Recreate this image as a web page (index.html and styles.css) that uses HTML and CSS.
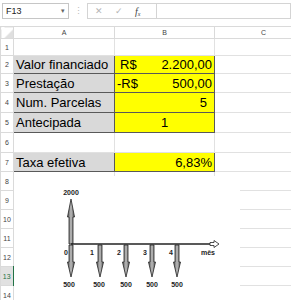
FILE: index.html
```html
<!DOCTYPE html>
<html lang="pt-BR">
<head>
    <meta charset="UTF-8">
    <title>Planilha - Taxa efetiva</title>
    <link rel="stylesheet" href="styles.css">
</head>
<body>
    <div class="formula-bar">
        <div class="name-box"><span>F13</span><span class="drop">&#9662;</span></div>
        <div class="grip">&#8942;</div>
        <div class="fx-buttons">
            <span class="btn">&#10005;</span>
            <span class="btn">&#10003;</span>
            <span class="btn fx">f<sub>x</sub></span>
        </div>
        <div class="formula-input"></div>
    </div>

    <div class="sheet">
        <table class="grid">
            <colgroup>
                <col class="col-head">
                <col class="col-a">
                <col class="col-b">
                <col class="col-c">
            </colgroup>
            <tr class="col-headers">
                <th class="corner"></th><th>A</th><th>B</th><th>C</th>
            </tr>
            <tr class="h17"><th>1</th><td></td><td></td><td></td></tr>
            <tr class="h18"><th>2</th><td class="label">Valor financiado</td><td class="value"><span class="cur">R$</span><span>2.200,00</span></td><td></td></tr>
            <tr><th>3</th><td class="label">Prestação</td><td class="value"><span class="cur neg">-R$</span><span>500,00</span></td><td></td></tr>
            <tr class="h20"><th>4</th><td class="label">Num. Parcelas</td><td class="value right"><span class="pad">5</span></td><td></td></tr>
            <tr class="h20"><th>5</th><td class="label">Antecipada</td><td class="value center">1</td><td></td></tr>
            <tr class="h20"><th>6</th><td></td><td></td><td></td></tr>
            <tr><th>7</th><td class="label">Taxa efetiva</td><td class="value right">6,83%</td><td></td></tr>
            <tr><th>8</th><td></td><td></td><td></td></tr>
            <tr><th>9</th><td></td><td></td><td></td></tr>
            <tr><th>10</th><td></td><td></td><td></td></tr>
            <tr><th>11</th><td></td><td></td><td></td></tr>
            <tr><th>12</th><td></td><td></td><td></td></tr>
            <tr><th class="active">13</th><td></td><td></td><td></td></tr>
            <tr><th>14</th><td></td><td></td><td></td></tr>
        </table>

        <svg class="diagram" viewBox="14 176 226 124" width="226" height="124">
            <defs>
                <linearGradient id="shade" x1="0" x2="1" y1="0" y2="0">
                    <stop offset="0" stop-color="#555"/>
                    <stop offset="0.5" stop-color="#bbb"/>
                    <stop offset="1" stop-color="#555"/>
                </linearGradient>
            </defs>
            <text x="71" y="195" class="lbl">2000</text>
            <polygon class="arrow" points="71,199 74.5,217 73,217 73,244 69,244 69,217 67.5,217"/>
            <line x1="71" y1="244" x2="211" y2="244" class="axis"/>
            <polygon class="tip" points="210,242.5 214,242.5 214,240.5 219,244 214,247.5 214,245.5 210,245.5"/>

            <polygon class="arrow" points="69,245 73,245 73,262 74.5,262 71,277 67.5,262 69,262"/>
            <polygon class="arrow" points="98,245 102,245 102,262 103.5,262 100,277 96.5,262 98,262"/>
            <polygon class="arrow" points="124,245 128,245 128,262 129.5,262 126,277 122.5,262 124,262"/>
            <polygon class="arrow" points="150,245 154,245 154,262 155.5,262 152,277 148.5,262 150,262"/>
            <polygon class="arrow" points="175,245 179,245 179,262 180.5,262 177,277 173.5,262 175,262"/>

            <text x="66" y="255" class="lbl">0</text>
            <text x="92" y="255" class="lbl">1</text>
            <text x="119" y="255" class="lbl">2</text>
            <text x="145" y="255" class="lbl">3</text>
            <text x="171" y="255" class="lbl">4</text>
            <text x="208" y="255" class="lbl">mês</text>

            <text x="69" y="287" class="lbl">500</text>
            <text x="99" y="287" class="lbl">500</text>
            <text x="126" y="287" class="lbl">500</text>
            <text x="152" y="287" class="lbl">500</text>
            <text x="177" y="287" class="lbl">500</text>
        </svg>
    </div>
</body>
</html>
```

FILE: styles.css
```css
body {
    margin: 0;
    font-family: "Liberation Sans", Arial, sans-serif;
    background-color: #fff;
    color: #000;
    overflow: hidden;
}
.formula-bar {
    display: flex;
    align-items: center;
    height: 16px;
    padding: 3px 0 0 2px;
}
.name-box {
    display: flex;
    align-items: center;
    justify-content: space-between;
    padding: 0 3px;
    box-sizing: border-box;
    width: 67px;
    height: 16px;
    border: 1px solid #c6c6c6;
    font-size: 9px;
    color: #222;
}
.name-box .drop {
    font-size: 7px;
    color: #666;
}
.grip {
    width: 18px;
    text-align: center;
    color: #bbb;
    font-size: 9px;
}
.fx-buttons {
    display: flex;
    align-items: center;
    height: 16px;
    width: 69px;
    box-sizing: border-box;
    border: 1px solid #d4d4d4;
    border-right: none;
    padding-left: 7px;
}
.btn {
    width: 20px;
    font-size: 9px;
    color: #b5b5b5;
}
.btn.fx {
    font-family: "Liberation Serif", serif;
    font-style: italic;
    color: #444;
    font-size: 10px;
    width: auto;
}
.btn.fx sub {
    font-size: 6px;
    vertical-align: -1px;
}
.formula-input {
    flex: 1;
    height: 16px;
    box-sizing: border-box;
    border: 1px solid #d4d4d4;
}
.sheet {
    position: relative;
    margin-top: 7px;
    width: 291px;
    height: 274px;
    overflow: hidden;
}
.grid {
    border-collapse: collapse;
    table-layout: fixed;
    width: 312px;
}
.col-head { width: 13px; }
.col-a { width: 101px; }
.col-b { width: 100px; }
.col-c { width: 98px; }
.grid th,
.grid td {
    border: 1px solid #e1e1e1;
    padding: 0;
    height: 19px;
    box-sizing: border-box;
    white-space: nowrap;
    overflow: hidden;
}
.grid .h17 th, .grid .h17 td { height: 17px; }
.grid .h18 th, .grid .h18 td { height: 18px; }
.grid .h20 th, .grid .h20 td { height: 20px; }
.grid th {
    font-weight: normal;
    font-size: 7px;
    color: #444;
    background-color: #fff;
    border-color: #dadada;
    text-align: center;
}
.col-headers th {
    height: 12px;
    font-size: 7px;
    border-top-color: #dadada;
}
.corner {
    background: linear-gradient(135deg, #fff 60%, #dfdfdf 60%) !important;
}
.grid th.active {
    color: #217346;
    background-color: #e1e1e1;
    border-right: 2px solid #217346;
}
.grid td {
    font-size: 13px;
    line-height: 17px;
}
.grid td.label {
    background-color: #d9d9d9;
    border: 1px solid #595959;
    padding-left: 2px;
}
.grid td.value {
    background-color: #ffff00;
    border: 1px solid #595959;
    padding: 0 2px;
}
.value .cur {
    float: left;
    padding-left: 3px;
}
.value .cur.neg {
    padding-left: 0;
}
.value span:last-child {
    float: right;
}
.value.right {
    text-align: right;
}
.value.right .pad {
    padding-right: 5px;
}
.value.center {
    text-align: center;
}
.diagram {
    position: absolute;
    left: 14px;
    top: 150px;
    background-color: #fff;
}
.lbl {
    font-family: "Liberation Sans", Arial, sans-serif;
    font-size: 7px;
    font-weight: bold;
    fill: #222;
    text-anchor: middle;
}
.arrow {
    fill: url(#shade);
    stroke: #222;
    stroke-width: 0.8;
}
.axis {
    stroke: #222;
    stroke-width: 1.4;
}
.tip {
    fill: #fff;
    stroke: #222;
    stroke-width: 0.8;
}
```
